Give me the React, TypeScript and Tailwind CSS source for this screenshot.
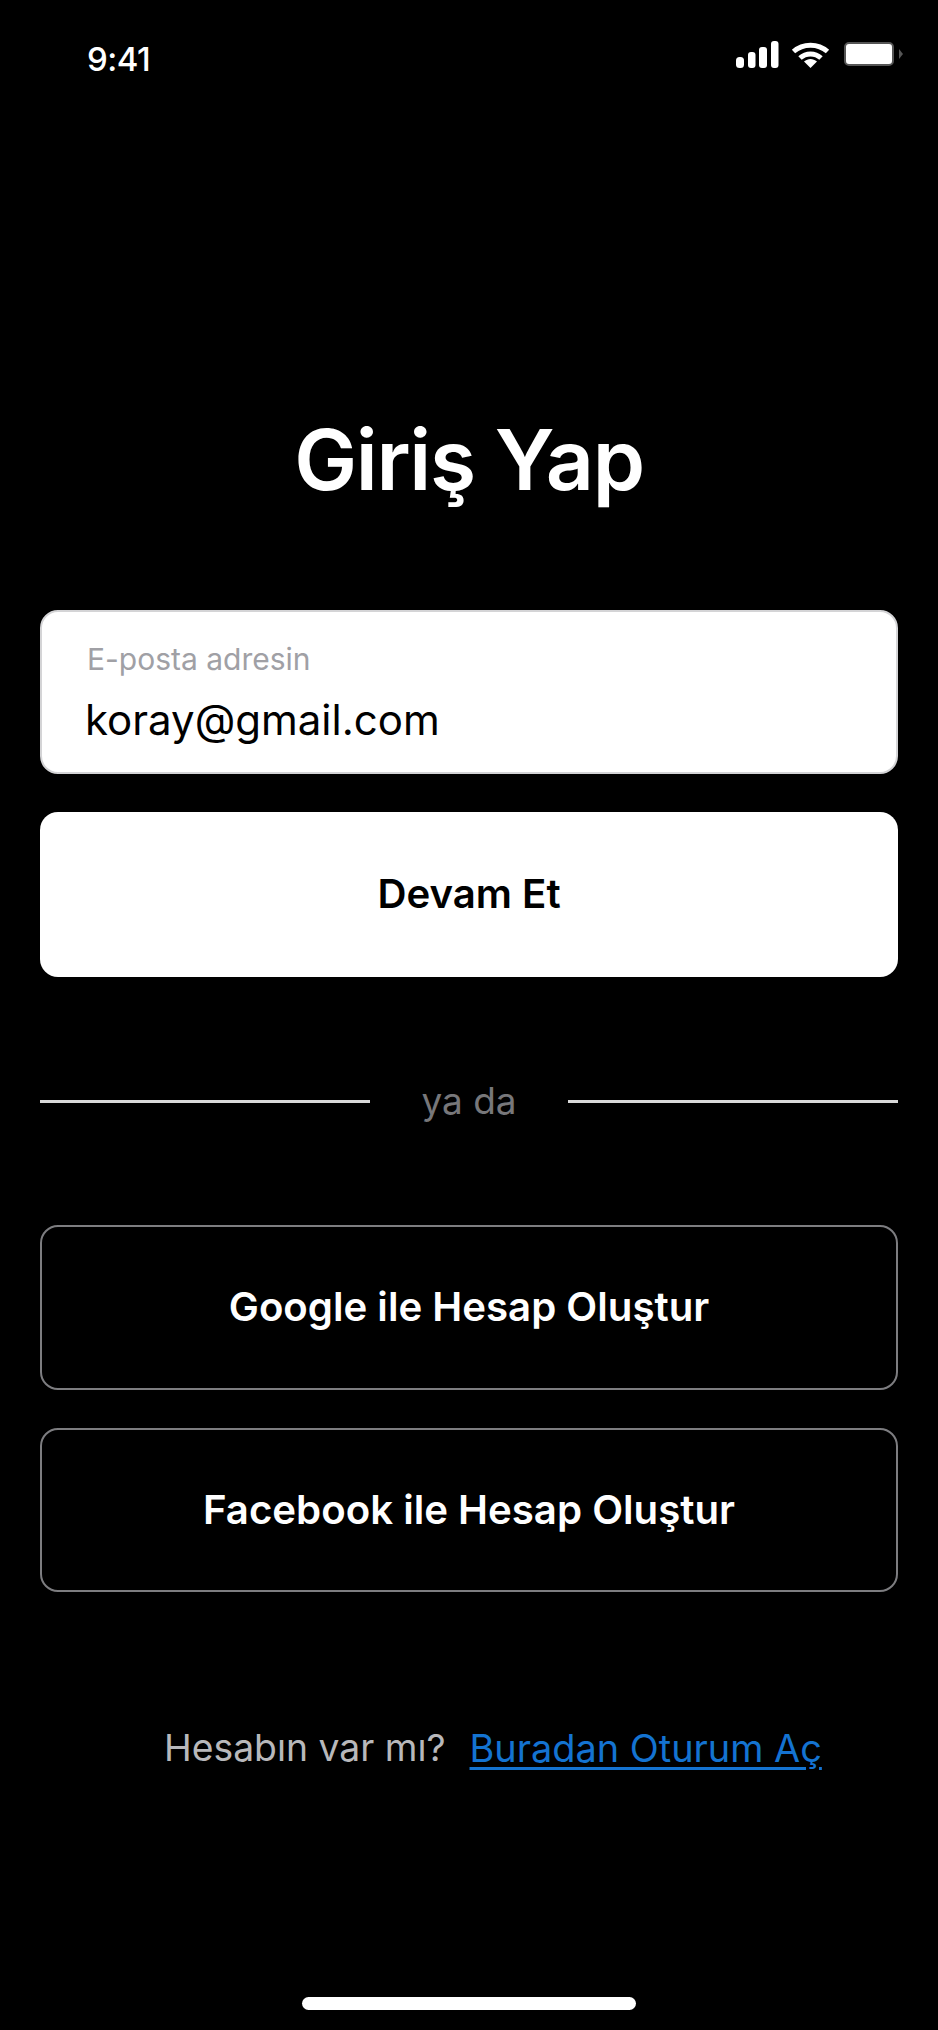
const inter = 'font-["Inter",sans-serif]';

function StatusBar() {
  return (
    <div className="flex h-[116px] items-center justify-between pl-[87px] pr-[34px]">
      <span className="mt-[2px] text-[33px] font-medium leading-[40px] tracking-[-0.5px] text-white">9:41</span>
      <svg width="168" height="30" viewBox="0 0 168 30" fill="none" className="mt-[-6px]">
        <rect x="0" y="17" width="8" height="11" rx="3.5" fill="#fff" />
        <rect x="12" y="12" width="7.5" height="16" rx="3" fill="#fff" />
        <rect x="23" y="7" width="8" height="21" rx="3" fill="#fff" />
        <rect x="35" y="1" width="7.5" height="27" rx="3" fill="#fff" />
        <path d="M57.5 11.5C67 3 82 3 91.5 11.5" stroke="#fff" strokeWidth="5" />
        <path d="M64 18C70 12.5 79 12.5 85 18" stroke="#fff" strokeWidth="5" />
        <path d="M68 21.5C72 18 77 18 81 21.5L74.5 28Z" fill="#fff" />
        <rect x="109" y="3" width="48" height="22" rx="4" fill="#fff" stroke="#555" strokeWidth="2" />
        <path d="M163 9L167 14L163 19Z" fill="#555" />
      </svg>
    </div>
  );
}

export default function App() {
  return (
    <div className={`${inter} relative flex h-[2030px] w-[938px] flex-col overflow-hidden bg-black`}>
      <StatusBar />
      <div className="flex flex-col px-10">
        <h1 className="mt-[300px] text-center text-[84px] font-semibold leading-[88px] tracking-[-1.3px] text-white">Giriş Yap</h1>

        <div className="mt-[106px] flex h-[164px] flex-col rounded-[18px] border-2 border-[#d4d4d6] bg-white pl-[43px] pt-[29px]">
          <span className="pl-[2px] text-[30px] leading-[36px] text-[#a0a0a5]">E-posta adresin</span>
          <span className="mt-[17px] text-[42px] leading-[52px] text-black">koray@gmail.com</span>
        </div>

        <button className="mt-[38px] h-[165px] rounded-[18px] bg-white text-[40.2px] font-semibold text-black">Devam Et</button>

        <div className="mt-[110px] flex h-[28px] items-center justify-between">
          <div className="h-[3px] w-[330px] bg-[#d9d9d9]" />
          <span className="text-[37px] leading-[28px] text-[#77777a]">ya da</span>
          <div className="h-[3px] w-[330px] bg-[#d9d9d9]" />
        </div>

        <button className="mt-[110px] h-[165px] rounded-[18px] border-2 border-[#7d7d80] text-[40.2px] font-semibold text-white">Google ile Hesap Oluştur</button>
        <button className="mt-[38px] h-[164px] rounded-[18px] border-2 border-[#7d7d80] text-[40.2px] font-semibold text-white">Facebook ile Hesap Oluştur</button>

        <div className="mt-[132px] flex items-center pl-[124px] text-[37.3px] leading-[48px]">
          <span className="text-[#b8b8bb]">Hesabın var mı?</span>
          <span className="ml-[24px] text-[37.9px] text-[#1473d1] underline decoration-[3px] underline-offset-[5px]">Buradan Oturum Aç</span>
        </div>
      </div>
      <div className="mt-auto mb-[20px] h-[13px] w-[334px] self-center rounded-full bg-white" />
    </div>
  );
}
